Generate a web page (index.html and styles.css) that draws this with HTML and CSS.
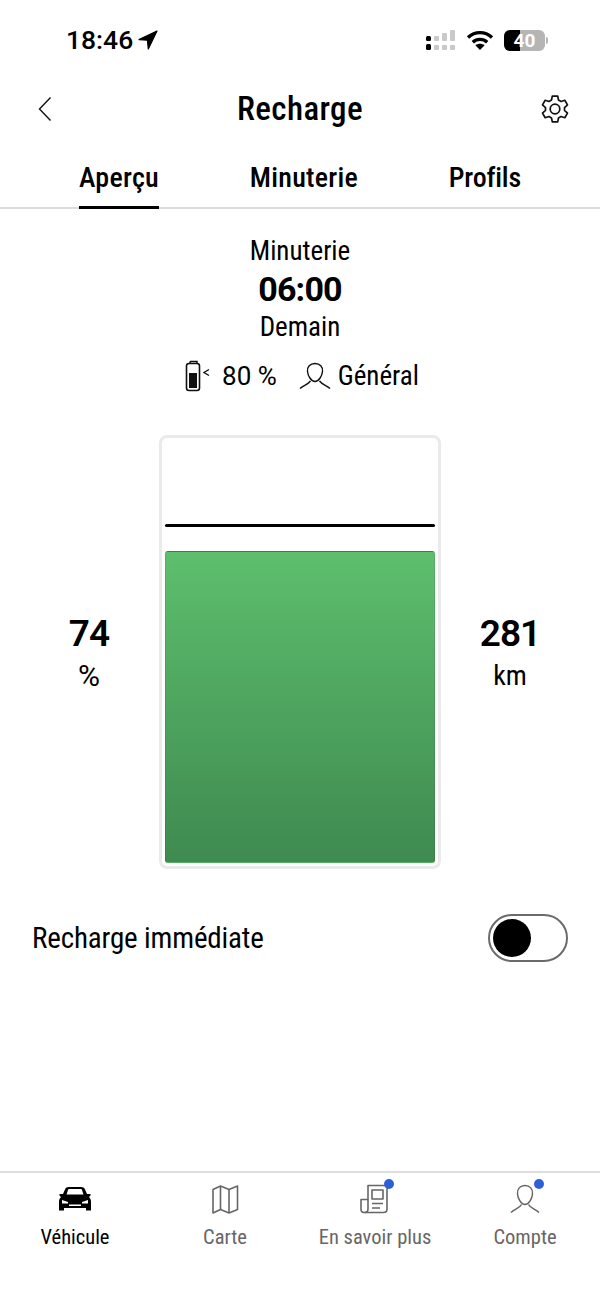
FILE: index.html
```html
<!DOCTYPE html>
<html lang="fr">
<head>
<meta charset="utf-8">
<title>Recharge</title>
<link rel="stylesheet" href="styles.css">
</head>
<body>
<div class="screen">
  <div class="status">
    <div class="status-left">
      <span class="clock">18:46</span>
      <svg class="loc" width="20" height="20" viewBox="0 0 20 20"><path d="M19 1 1 9.600l8.400.6.9 8.800z" fill="#000" stroke="#000" stroke-width="1.200" stroke-linejoin="round"/></svg>
    </div>
    <div class="status-right">
      <svg width="32" height="22" viewBox="0 0 32 22">
        <g fill="#000"><rect x="1" y="7" width="5" height="5" rx="1.500"/><rect x="1" y="15" width="5" height="6" rx="1.500"/></g>
        <g fill="#c9c9c9"><rect x="9" y="7" width="5" height="5" rx="1"/><rect x="9" y="16" width="5" height="5" rx="1"/><rect x="17" y="4" width="5" height="8" rx="1"/><rect x="17" y="16" width="5" height="5" rx="1"/><rect x="25" y="1" width="5" height="11" rx="1"/><rect x="25" y="16" width="5" height="5" rx="1"/></g>
      </svg>
      <svg class="wifi" width="28" height="20" viewBox="0 0 28 20" fill="none" stroke="#000" stroke-width="3.400"><path d="M2 7.500C9 1 19 1 26 7.500"/><path d="M6.800 12.200C11 8.400 17 8.400 21.200 12.200"/><path d="M14 20l-4.600-4.700c2.700-2 6.500-2 9.200 0z" fill="#000" stroke="none"/></svg>
      <div class="batt">
        <div class="batt-body"><div class="batt-level"></div><span class="batt-num">40</span></div>
        <div class="batt-tip"></div>
      </div>
    </div>
  </div>

  <header class="nav">
    <svg class="nav-back" width="14" height="26" viewBox="0 0 14 26" fill="none" stroke="#111" stroke-width="1.400"><path d="M12.500 1.500 1.500 13l11 11.500"/></svg>
    <h1 class="nav-title">Recharge</h1>
    <svg class="nav-gear" width="30" height="30" viewBox="0 0 30 30" fill="none" stroke="#111" stroke-width="1.700" stroke-linejoin="round"><path d="M12.300 2.200h5.400l.8 3.900 2.500 1.400 3.800-1.200 2.700 4.600-3 2.700v2.800l3 2.700-2.700 4.600-3.800-1.200-2.500 1.400-.8 3.900h-5.400l-.8-3.900-2.500-1.400-3.800 1.200-2.700-4.600 3-2.700v-2.800l-3-2.700 2.700-4.600 3.800 1.200 2.500-1.400z"/><circle cx="15" cy="15" r="4.800"/></svg>
  </header>

  <nav class="tabs">
    <span class="tab tab-on">Aperçu</span>
    <span class="tab">Minuterie</span>
    <span class="tab tab-tight">Profils</span>
  </nav>

  <section class="summary">
    <div class="summary-line">Minuterie</div>
    <div class="summary-time">06:00</div>
    <div class="summary-line">Demain</div>
    <div class="summary-meta">
      <span class="meta-item meta-charge">
        <svg width="26" height="32" viewBox="0 0 26 32" fill="none"><path d="M5 1.500h7v2.500M5 1.500v2.500" stroke="#111" stroke-width="1.500"/><rect x="1.500" y="3.500" width="13" height="27" rx="2.500" stroke="#111" stroke-width="1.600"/><rect x="4" y="13" width="8" height="15" fill="#111"/><path d="M24 9.500l-5 3 5 3" stroke="#111" stroke-width="1.400"/></svg>
        80 %
      </span>
      <span class="meta-item">
        <svg width="32" height="28" viewBox="0 0 32 28" fill="none" stroke="#111" stroke-width="1.400"><path d="M16 1.500c-5 0-8 3.500-7.500 8 .4 4 3.500 10 7.500 10s7.100-6 7.500-10c.5-4.500-2.500-8-7.500-8z"/><path d="M1 26.500c3-3 8-4 10.500-7.500M31 26.500c-3-3-8-4-10.500-7.500"/></svg>
        Général
      </span>
    </div>
  </section>

  <section class="level">
    <div class="level-side"><strong>74</strong><span class="unit-percent">%</span></div>
    <div class="gauge">
      <div class="gauge-target"></div>
      <div class="gauge-fill"></div>
    </div>
    <div class="level-side"><strong>281</strong><span>km</span></div>
  </section>

  <section class="instant">
    <span>Recharge immédiate</span>
    <div class="switch"><div class="switch-knob"></div></div>
  </section>

  <footer class="bar">
    <div class="bar-item bar-on">
      <svg width="36" height="30" viewBox="0 0 36 30">
        <path d="M8 5.500C8.700 3.700 10 3 12 3h12c2 0 3.300.7 4 2.500l2 4.500h3.500v1.500L32 13c1.500 1.500 2 3 2 5v8.500h-5V24H7v2.500H2V18c0-2 .5-3.500 2-5l-1.500-1.500V10H6z" fill="#000"/>
        <path d="M9.500 10.500 11 6c.2-.8.600-1 1.500-1h11c.9 0 1.300.2 1.500 1l1.500 4.500z" fill="#fff"/>
        <path d="M5 16l6 2v1.500H5zM31 16l-6 2v1.500h6zM12 20.500h12V22H12z" fill="#fff"/>
      </svg>
      <span>Véhicule</span>
    </div>
    <div class="bar-item">
      <svg width="36" height="30" viewBox="0 0 36 30" fill="none" stroke="#666" stroke-width="1.600" stroke-linejoin="round"><path d="M6 5.500 13.500 2 22 5.500 30.500 2v23.500L22 29l-8.500-3.500L6 29z"/><path d="M13.500 2v23.500M22 5.500V29"/></svg>
      <span>Carte</span>
    </div>
    <div class="bar-item">
      <div class="bar-icon">
        <svg width="36" height="30" viewBox="0 0 36 30" fill="none" stroke="#666" stroke-width="1.600" stroke-linejoin="round"><path d="M11 1.500h21c-1.500 1-2 2-2 4V25c0 2-1.500 3.500-3.500 3.500H7c-2 0-3-1.500-3-3.500V15.500h7z"/><path d="M11 15.500V25c0 2-1.500 3.500-3.500 3.500"/><rect x="15" y="6" width="11" height="9"/><path d="M15 19.500h11M15 24h8"/></svg>
        <i class="dot"></i>
      </div>
      <span>En savoir plus</span>
    </div>
    <div class="bar-item">
      <div class="bar-icon">
        <svg width="36" height="30" viewBox="0 0 36 30" fill="none" stroke="#666" stroke-width="1.500"><path d="M18 1.500c-5 0-8 3.500-7.500 8.500.4 4.500 3.500 10.500 7.500 10.500s7.100-6 7.500-10.500c.5-5-2.500-8.500-7.500-8.500z"/><path d="M4 28.500c3.500-3.500 8.500-4 10.500-8M32 28.500c-3.500-3.500-8.500-4-10.500-8"/></svg>
        <i class="dot"></i>
      </div>
      <span>Compte</span>
    </div>
  </footer>
</div>
</body>
</html>
```
FILE: styles.css
```css
* { box-sizing: border-box; }

html, body { margin: 0; background: #fff; }

.screen {
  width: 600px;
  height: 1300px;
  display: flex;
  flex-direction: column;
  color: #000;
  font-family: Roboto, "Liberation Sans", sans-serif;
  font-stretch: 85%;
  overflow: hidden;
}

/* system status bar */
.status {
  height: 80px;
  padding: 0 52px 0 66px;
  display: flex;
  justify-content: space-between;
  align-items: center;
}
.status-left { display: flex; align-items: center; gap: 5px; }
.clock { font-size: 26.5px; font-weight: 500; line-height: 1; font-stretch: 100%; }
.status-right { display: flex; align-items: center; gap: 9px; }
.wifi { margin-right: 1px; }
.batt { display: flex; align-items: center; gap: 1px; }
.batt-body {
  width: 41px;
  height: 21px;
  border-radius: 6px;
  background: #b5b5b5;
  position: relative;
  overflow: hidden;
  display: flex;
  justify-content: center;
  align-items: center;
}
.batt-level { position: absolute; left: 0; top: 0; bottom: 0; width: 16px; background: #000; }
.batt-num { position: relative; color: #fff; font-size: 19px; font-weight: 700; line-height: 1; font-stretch: 100%; }
.batt-tip { width: 2px; height: 7px; border-radius: 0 2px 2px 0; background: #b5b5b5; }

/* page title */
.nav {
  height: 58px;
  padding: 0 30px;
  display: grid;
  grid-template-columns: 1fr auto 1fr;
  align-items: center;
}
.nav-back { margin-left: 8px; }
.nav-title {
  margin: 0;
  font-size: 33px;
  font-weight: 500;
  line-height: 58px;
  letter-spacing: 0.4px;
}
.nav-gear { justify-self: end; }

/* section tabs */
.tabs {
  height: 71px;
  padding: 0 79px;
  display: flex;
  justify-content: space-between;
  border-bottom: 2px solid #ddd;
}
.tab {
  height: 71px;
  line-height: 80px;
  font-size: 28px;
  font-weight: 500;
  letter-spacing: 0.25px;
}
.tab-tight { letter-spacing: -0.2px; }
.tab-on { border-bottom: 3px solid #000; }

/* next timer */
.summary {
  height: 226px;
  padding-top: 23px;
  display: flex;
  flex-direction: column;
  align-items: center;
}
.summary-line { font-size: 27px; line-height: 38px; height: 38px; }
.summary-time { font-size: 34px; font-weight: 700; line-height: 38px; height: 38px; font-stretch: 100%; letter-spacing: -0.8px; }
.summary-meta {
  margin-top: 12px;
  padding-left: 4px;
  display: flex;
  align-items: center;
  gap: 22px;
  font-size: 27px;
  height: 36px;
}
.meta-item { display: flex; align-items: center; gap: 7px; }
.meta-charge { gap: 11px; font-size: 26px; font-stretch: 100%; }

/* charge level */
.level {
  height: 434px;
  padding: 0 40px 0 39px;
  display: grid;
  grid-template-columns: 100px 1fr 100px;
  align-items: center;
}
.level-side { display: flex; flex-direction: column; align-items: center; gap: 2px; padding-top: 5px; }
.level-side strong { font-size: 37px; font-weight: 600; line-height: 40px; font-stretch: 100%; letter-spacing: -1px; }
.level-side span { font-size: 28px; line-height: 40px; }
.level-side .unit-percent { font-stretch: 100%; font-size: 30px; }
.gauge {
  width: 282px;
  height: 434px;
  justify-self: center;
  padding: 3px;
  border: 3px solid #eaeaea;
  border-radius: 8px;
  display: flex;
  flex-direction: column;
  justify-content: flex-end;
  gap: 24px;
}
.gauge-target { height: 3px; border-radius: 2px; background: #000; }
.gauge-fill {
  height: 312px;
  border: 1px solid rgba(0, 0, 0, 0.08);
  border-radius: 3px;
  background: linear-gradient(#5dbf6d, #3f8a50);
}

/* instant charge toggle */
.instant {
  height: 48px;
  margin-top: 45px;
  padding: 0 32px;
  display: flex;
  justify-content: space-between;
  align-items: center;
  font-size: 29px;
  letter-spacing: -0.15px;
}
.switch {
  width: 80px;
  height: 48px;
  padding: 0 3px;
  border: 2px solid #6b6b6b;
  border-radius: 24px;
  display: flex;
  align-items: center;
}
.switch-knob { width: 38px; height: 38px; border-radius: 50%; background: #000; }

/* bottom navigation */
.bar {
  margin-top: auto;
  height: 129px;
  border-top: 2px solid #ddd;
  display: grid;
  grid-template-columns: repeat(4, 150px);
}
.bar-item {
  padding-top: 11px;
  display: flex;
  flex-direction: column;
  align-items: center;
  gap: 8px;
  color: #666;
  font-size: 20.5px;
}
.bar-item span { line-height: 30px; }
.bar-on { color: #000; }
.bar-icon { position: relative; height: 30px; }
.bar-icon svg { display: block; }
.dot {
  position: absolute;
  top: -5px;
  right: -1px;
  width: 10px;
  height: 10px;
  border-radius: 50%;
  background: #2f5fd8;
}
```
